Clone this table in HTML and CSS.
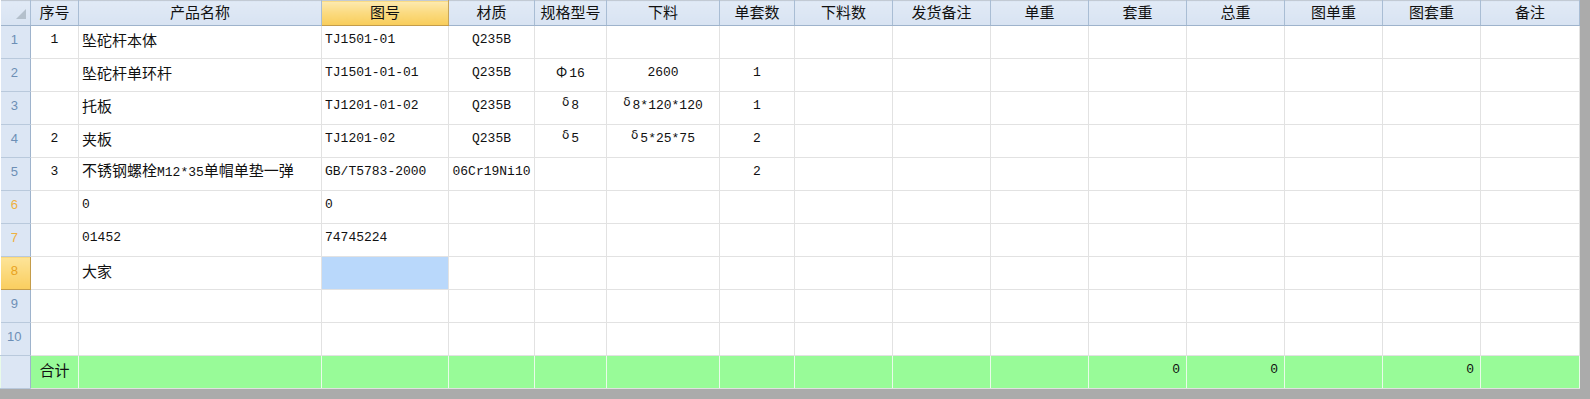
FILE: index.html
```html
<!DOCTYPE html>
<html lang="zh-CN">
<head>
<meta charset="utf-8">
<title>产品明细</title>
<link rel="stylesheet" href="styles.css">
</head>
<body>
<div class="sheet">
<table class="grid">
<colgroup>
<col class="w30"><col class="w48"><col class="w243"><col class="w127"><col class="w86"><col class="w72"><col class="w113"><col class="w75">
<col class="w98"><col class="w98"><col class="w98"><col class="w98"><col class="w98"><col class="w98"><col class="w98"><col class="w99">
</colgroup>
<thead>
<tr class="hdr">
<th class="corner"><svg class="tri" width="10" height="10" viewBox="0 0 10 10"><polygon points="10,0 10,10 0,10" fill="#b4c0cc"/></svg></th>
<th>序号</th><th>产品名称</th><th class="hl">图号</th><th>材质</th><th>规格型号</th><th>下料</th><th>单套数</th><th>下料数</th><th>发货备注</th><th>单重</th><th>套重</th><th>总重</th><th>图单重</th><th>图套重</th><th>备注</th>
</tr>
</thead>
<tbody>
<tr><td class="rh">1</td><td class="c m">1</td><td class="l">坠砣杆本体</td><td class="l m">TJ1501-01</td><td class="c m">Q235B</td><td></td><td></td><td></td><td></td><td></td><td></td><td></td><td></td><td></td><td></td><td></td></tr>
<tr><td class="rh">2</td><td></td><td class="l">坠砣杆单环杆</td><td class="l m">TJ1501-01-01</td><td class="c m">Q235B</td><td class="c m"><span class="gk">Φ</span>16</td><td class="c m">2600</td><td class="c m">1</td><td></td><td></td><td></td><td></td><td></td><td></td><td></td><td></td></tr>
<tr><td class="rh">3</td><td></td><td class="l">托板</td><td class="l m">TJ1201-01-02</td><td class="c m">Q235B</td><td class="c m"><span class="dl">δ</span>8</td><td class="c m"><span class="dl">δ</span>8*120*120</td><td class="c m">1</td><td></td><td></td><td></td><td></td><td></td><td></td><td></td><td></td></tr>
<tr><td class="rh">4</td><td class="c m">2</td><td class="l">夹板</td><td class="l m">TJ1201-02</td><td class="c m">Q235B</td><td class="c m"><span class="dl">δ</span>5</td><td class="c m"><span class="dl">δ</span>5*25*75</td><td class="c m">2</td><td></td><td></td><td></td><td></td><td></td><td></td><td></td><td></td></tr>
<tr><td class="rh">5</td><td class="c m">3</td><td class="l">不锈钢螺栓<span class="m">M12*35</span>单帽单垫一弹</td><td class="l m">GB/T5783-2000</td><td class="c m">06Cr19Ni10</td><td></td><td></td><td class="c m">2</td><td></td><td></td><td></td><td></td><td></td><td></td><td></td><td></td></tr>
<tr><td class="rh rh-o">6</td><td></td><td class="l m">0</td><td class="l m">0</td><td></td><td></td><td></td><td></td><td></td><td></td><td></td><td></td><td></td><td></td><td></td><td></td></tr>
<tr><td class="rh rh-o">7</td><td></td><td class="l m">01452</td><td class="l m">74745224</td><td></td><td></td><td></td><td></td><td></td><td></td><td></td><td></td><td></td><td></td><td></td><td></td></tr>
<tr><td class="rh rh-sel">8</td><td></td><td class="l">大家</td><td class="sel"></td><td></td><td></td><td></td><td></td><td></td><td></td><td></td><td></td><td></td><td></td><td></td><td></td></tr>
<tr><td class="rh">9</td><td></td><td></td><td></td><td></td><td></td><td></td><td></td><td></td><td></td><td></td><td></td><td></td><td></td><td></td><td></td></tr>
<tr><td class="rh">10</td><td></td><td></td><td></td><td></td><td></td><td></td><td></td><td></td><td></td><td></td><td></td><td></td><td></td><td></td><td></td></tr>
<tr class="tot"><td class="rh"></td><td class="c">合计</td><td></td><td></td><td></td><td></td><td></td><td></td><td></td><td></td><td></td><td class="r m">0</td><td class="r m">0</td><td></td><td class="r m">0</td><td></td></tr>
</tbody>
</table>
</div>
</body>
</html>
```
FILE: styles.css
```css
html, body {
  margin: 0;
  padding: 0;
}
body {
  background: #ababab;
  width: 1590px;
  height: 399px;
  overflow: hidden;
  font-family: "Noto Sans CJK SC", "Liberation Sans", sans-serif;
}
.sheet {
  background: #ffffff;
  border-right: 1px solid #8e8e8e;
  box-sizing: border-box;
  width: 1580px;
}
.grid {
  border-collapse: collapse;
  table-layout: fixed;
  width: 1579px;
}
.w30 { width: 30px; }
.w48 { width: 48px; }
.w243 { width: 243px; }
.w127 { width: 127px; }
.w86 { width: 86px; }
.w72 { width: 72px; }
.w113 { width: 113px; }
.w75 { width: 75px; }
.w98 { width: 98px; }
.w99 { width: 99px; }

.hdr th {
  height: 22px;
  padding: 0 0 2px;
  background: linear-gradient(#e1eaf6, #d8e3f2);
  border: 1px solid #a9bdd4;
  border-top: 1px solid #c2cad4;
  border-bottom: 1px solid #9eb3cc;
  font-weight: normal;
  font-size: 15px;
  line-height: 18px;
  color: #111;
  text-align: center;
  white-space: nowrap;
  overflow: hidden;
}
.hdr th.corner {
  text-align: left;
  vertical-align: top;
  border-left: none;
}
.tri {
  display: block;
  margin: 8px 0 0 15px;
}
.hdr th.hl {
  background: linear-gradient(#fdeab0, #fbdb82 45%, #f8cd5a);
  border-left: 1px solid #c7a55a;
  border-right: 1px solid #c7a55a;
  border-bottom: 1px solid #c49c4a;
}

tbody tr { height: 33px; }
td {
  border: 1px solid #e2e2e2;
  padding: 0 3px 5px;
  font-size: 15px;
  line-height: 18px;
  color: #111;
  white-space: nowrap;
  overflow: hidden;
  vertical-align: middle;
}
td.rh {
  background: #dce6f4;
  border-left: none;
  border-right: 1px solid #9eb3cc;
  border-top: 1px solid #b9c9dc;
  border-bottom: 1px solid #b9c9dc;
  font-family: "Liberation Sans", sans-serif;
  font-size: 13px;
  color: #6d8fb6;
  text-align: center;
  padding: 0 2px 4px 0;
}
td.rh-o { color: #eeb040; }
td.rh-sel {
  background: linear-gradient(#fde498, #f9cd5e);
  border-bottom: 1px solid #c49c4a;
  border-top: 1px solid #c49c4a;
  border-right: 1px solid #c49c4a;
  color: #e9a21e;
}
.c { text-align: center; }
.l { text-align: left; }
.r { text-align: right; padding-right: 6px; }
.m {
  font-family: "Liberation Mono", "Noto Sans CJK SC", monospace;
  font-size: 13px;
}
.gk {
  font-family: "Noto Sans CJK SC", sans-serif;
  font-size: 14px;
  margin-right: 2px;
}
.dl {
  font-family: "DejaVu Sans", sans-serif;
  font-size: 12px;
  position: relative;
  top: -3px;
  margin-right: 2px;
}
td.sel { background: #b9d8fb; }
.tot td {
  background: #98fb98;
  border: 1px solid #e9fbe9;
  border-bottom: 1px solid #e0e0e0;
}
.tot td.rh {
  background: #dce6f4;
  border-right: 1px solid #9eb3cc;
  border-top: 1px solid #b9c9dc;
  border-bottom: 1px solid #b9c9dc;
}
```
